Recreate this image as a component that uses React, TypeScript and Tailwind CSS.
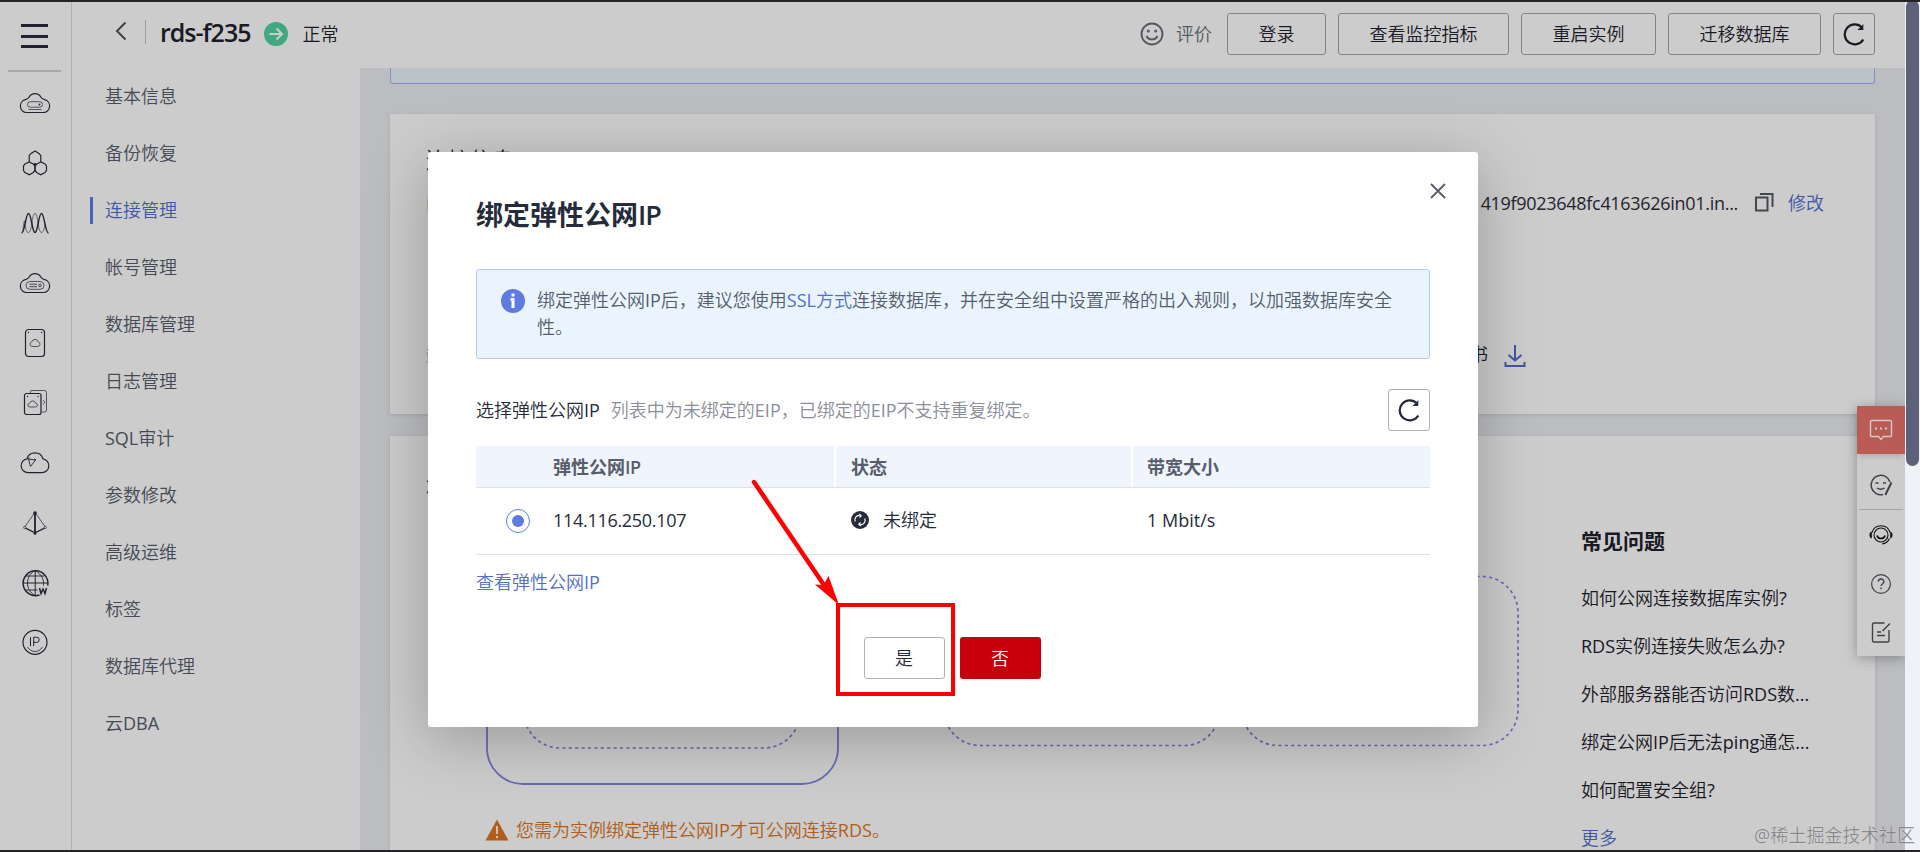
import type { ReactNode } from "react";
import { clsx } from "clsx";

const menu = [
  "基本信息",
  "备份恢复",
  "连接管理",
  "帐号管理",
  "数据库管理",
  "日志管理",
  "SQL审计",
  "参数修改",
  "高级运维",
  "标签",
  "数据库代理",
  "云DBA",
];

const faqs = [
  "如何公网连接数据库实例?",
  "RDS实例连接失败怎么办?",
  "外部服务器能否访问RDS数...",
  "绑定公网IP后无法ping通怎...",
  "如何配置安全组?",
];

const CLOUD =
  "M7.5 25.5a6.5 6.5 0 0 1-1.2-12.8c2-.5 3-1 3.9-2.7a6.6 6.6 0 0 1 11.6 0c.9 1.700 1.900 2.200 3.900 2.700a6.500 6.500 0 0 1-1.200 12.800z";

const railIcons: ReactNode[] = [
  <>
    <path d={CLOUD} />
    <rect x="8.500" y="14.700" width="15" height="5.500" rx="2.700" strokeWidth="0.7" />
    <circle cx="20.500" cy="17.500" r="0.900" fill="currentColor" stroke="none" />
    <path d="M9.500 22.500h13" strokeWidth="0.7" />
  </>,
  <>
    <path d="M10.200 15V8.700l1.500-2L16 4l4.300 2.700 1.500 2V15" />
    <path d="M10.200 15L6 17l-1.500 2v4.500l1.500 2 4.300 2.200 4-2.200 1.700-2V19l-1.700-2z" />
    <path d="M21.800 15l-4.100 2-1.700 2v4.500l1.700 2 4 2.200 4.300-2.200 1.500-2V19L26 17z" />
    <circle cx="16" cy="17.300" r="1.200" fill="currentColor" stroke="none" />
  </>,
  <>
    <path d="M2.500 26C6 26 6.500 6.500 9.500 6.500s3.500 19 6.500 19 3.500-19 6.500-19 3.500 19.500 7 19.500" strokeWidth="1.400" />
    <path
      d="M4 25C4 17 6 10 6 16c.5 5 1 9.500 3.500 9.500 4 0 3-19 6.500-19s2.500 19 6.500 19c2.500 0 3-6 3.500-9"
      strokeWidth="0.6"
    />
  </>,
  <>
    <path d={CLOUD} />
    <rect x="7" y="14.500" width="18" height="7.800" rx="3.900" strokeWidth="0.7" />
    <path d="M10.500 17.200h7.500M10.500 19.700h7.500" strokeWidth="0.8" />
    <circle cx="21" cy="18.400" r="1.300" strokeWidth="0.8" />
  </>,
  <>
    <rect x="6.500" y="2.500" width="19" height="27" rx="3" />
    <circle cx="9.500" cy="5.500" r="0.700" fill="currentColor" stroke="none" />
    <circle cx="22.500" cy="5.500" r="0.700" fill="currentColor" stroke="none" />
    <path
      d="M13 19.500a2.300 2.300 0 0 1-.3-4.500 3.400 3.400 0 0 1 6.600 0 2.300 2.300 0 0 1-.3 4.500z"
      strokeWidth="0.7"
    />
  </>,
  <>
    <path d="M11 6.500l1-3h13.500a2 2 0 0 1 2 2V23a2 2 0 0 1-2 2H23" strokeWidth="0.7" />
    <rect x="5.500" y="6.500" width="16.500" height="21" rx="2" />
    <circle cx="8.500" cy="9.500" r="0.700" fill="currentColor" stroke="none" />
    <circle cx="19" cy="9.500" r="0.700" fill="currentColor" stroke="none" />
    <path
      d="M11 20a1.900 1.900 0 0 1-.2-3.800 3 3 0 0 1 5.800 0A1.900 1.900 0 0 1 16.400 20zM24 13.500c2 0 2 3.500 0 3.500"
      strokeWidth="0.7"
    />
  </>,
  <>
    <path d="M9 25.700a7 7 0 0 1-1-13.900 8.400 8.400 0 0 1 16 0 7 7 0 0 1-1 13.900z" />
    <path d="M10 10.500c-.5 3 .5 6 1.500 9M11.500 19.500l5-6.500M8.500 12l8.500 1M17 13l-2-1" strokeWidth="0.9" />
  </>,
  <>
    <path d="M16 6v21" strokeWidth="1.800" />
    <path d="M15.500 6L6 19.500M16.500 6L26 19.500" strokeWidth="0.7" />
    <path d="M7 21.300l9 4.500 9-4.500" strokeWidth="1.300" />
    <circle cx="16" cy="6" r="1.800" fill="currentColor" stroke="none" />
    <circle cx="5.800" cy="20.500" r="1.200" strokeWidth="0.7" />
    <circle cx="26.200" cy="20.500" r="1.200" strokeWidth="0.7" />
    <circle cx="16" cy="26.500" r="1.200" strokeWidth="0.7" />
  </>,
  <>
    <path d="M20.500 28A12.400 12.400 0 1 1 28.700 18.500" strokeWidth="1.500" />
    <path d="M3.500 16h25.500M16.200 3.500v25" strokeWidth="1" />
    <path d="M16 3.500c-10 5-10 20 0 25M16 3.500c7 4 9 9 8.500 15M6.500 9h19M6.500 23h12" strokeWidth="0.9" />
    <path d="M20.500 21l1.500 5.500 2-4.500 2 4.500 1.500-5.500" strokeWidth="1.500" />
  </>,
  <>
    <circle cx="16" cy="15.300" r="12" />
    <path d="M11.500 10.200v9M14.700 19.200v-9h2.900a2.600 2.600 0 0 1 0 5.200h-2.900" strokeWidth="1" />
    <path d="M8.500 20c3.500 6 11.500 6 15 0" strokeWidth="0.8" />
  </>,
];

const RefreshIcon = () => (
  <svg viewBox="0 0 24 24" className="h-6 w-6" fill="none" stroke="currentColor" strokeWidth="2.200">
    <path d="M21.300 17.500a10 10 0 1 1-1.300-12" />
    <path d="M21.300 2v6h-6l3-2.500z" fill="currentColor" stroke="none" />
  </svg>
);

const HeaderButton = ({ children }: { children: ReactNode }) => (
  <button className="h-[42px] rounded-[3px] border border-[#a4a6ad] px-[30.500px] text-[#1f222d]">
    {children}
  </button>
);

const Header = () => (
  <header className="flex h-[66px] shrink-0 items-start pl-[43px] pr-[30px] pt-[11px]">
    <svg viewBox="0 0 12 20" className="mt-[8px] h-5 w-3" fill="none" stroke="#50535c" strokeWidth="2">
      <path d="M10.500 1.500L2 10l8.500 8.500" />
    </svg>
    <div className="ml-[18px] mt-[7px] h-6 w-px bg-[#c3c5ca]" />
    <h1 className="ml-[14px] text-[25px] font-semibold leading-[39px] tracking-[-1px] text-[#1f222d]">
      rds-f235
    </h1>
    <svg viewBox="0 0 24 24" className="ml-[13px] mt-[9px] h-6 w-6">
      <circle cx="12" cy="12" r="12" fill="#50d4a3" />
      <path d="M5.500 12h12M12.500 6.500L18 12l-5.500 5.500" fill="none" stroke="#fff" strokeWidth="2" />
    </svg>
    <span className="ml-[15px] leading-[42px] text-[#1f222d]">正常</span>

    <div className="ml-auto flex gap-3">
      <div className="mr-[3px] flex items-center gap-3 text-[#6c6f78]">
        <svg viewBox="0 0 24 24" className="h-6 w-6" fill="none" stroke="currentColor" strokeWidth="1.900">
          <circle cx="12" cy="12" r="10.500" />
          <path d="M6.500 14c2 4.500 9 4.500 11 0" />
          <circle cx="8.300" cy="9" r="0.600" />
          <circle cx="15.700" cy="9" r="0.600" />
        </svg>
        评价
      </div>
      <HeaderButton>登录</HeaderButton>
      <HeaderButton>查看监控指标</HeaderButton>
      <HeaderButton>重启实例</HeaderButton>
      <HeaderButton>迁移数据库</HeaderButton>
      <button className="flex h-[42px] w-[42px] items-center justify-center rounded-[3px] border border-[#a4a6ad] text-[#1f222d]">
        <RefreshIcon />
      </button>
    </div>
  </header>
);

const Rail = () => (
  <nav className="flex w-[72px] shrink-0 flex-col items-center border-r border-[#dcdde0] pr-[2px] pt-[22px]">
    <div className="flex h-6 w-[27px] flex-col justify-between">
      <i className="h-[3px] bg-[#292c3b]" />
      <i className="h-[3px] bg-[#292c3b]" />
      <i className="h-[3px] bg-[#292c3b]" />
    </div>
    <div className="mt-[22px] h-[2px] w-[53px] bg-[#d3d4d8]" />
    <div className="mt-[15px] flex flex-col gap-7">
      {railIcons.map((icon, i) => (
        <svg
          key={i}
          viewBox="0 0 32 32"
          className="h-8 w-8 text-[#292c3b]"
          fill="none"
          stroke="currentColor"
          strokeWidth="1.200"
        >
          {icon}
        </svg>
      ))}
    </div>
  </nav>
);

const SideMenu = () => (
  <aside className="w-72 shrink-0">
    {menu.map((item) => {
      const active = item === "连接管理";
      return (
        <div key={item} className="flex h-[57px] items-center pl-[18px]">
          <div className={clsx("h-[27px] w-[3px]", active && "bg-[#5e7ce0]")} />
          <span className={clsx("ml-3 pb-[2px]", active ? "text-[#526ecc]" : "text-[#575d6c]")}>
            {item}
          </span>
        </div>
      );
    })}
  </aside>
);

const ConnectionCard = () => (
  <section className="mt-[30px] h-[300px] shrink-0 bg-white px-9 pt-[29px] shadow-[0_1px_4px_rgba(0,0,0,0.12)]">
    <h2 className="text-[22px] leading-8 text-[#1f222d]">连接信息</h2>
    <div className="mt-[10px] flex h-9 items-center justify-between">
      <span className="text-[#8a8e99]">内网地址</span>
      <div className="mr-[15px] flex items-center text-[#2c2f3a]">
        <span className="tracking-[-0.300px]">419f9023648fc4163626in01.in...</span>
        <svg viewBox="0 0 20 20" className="mb-[2px] ml-4 h-5 w-5" fill="none" stroke="#575b66" strokeWidth="2">
          <path d="M2 5.500h11.500V18.500H2zM6 2h12.500v13" />
        </svg>
        <span className="ml-[14px] text-[#526ecc]">修改</span>
      </div>
    </div>
    <div className="mt-[115px] flex h-9 items-center justify-between">
      <span className="text-[#8a8e99]">数据库端口</span>
      <div className="mr-[313px] flex items-center text-[#1f222d]">
        证书
        <svg viewBox="0 0 22 24" className="ml-4 mt-[3px] h-6 w-[22px]" fill="none" stroke="#5469c9" strokeWidth="2">
          <path d="M11 1v15.500M4.500 11l6.500 5.500 6.500-5.500M1.500 18v4h19v-4" />
        </svg>
      </div>
    </div>
  </section>
);

// VPC / instance frames of the network diagram
const Topology = () => (
  <svg viewBox="0 0 1060 250" className="h-[250px] w-[1060px]" fill="none" stroke="#8286e0">
    <rect x="2" y="-40" width="351" height="284" rx="36" strokeWidth="1.800" />
    <rect x="39" y="37" width="276" height="171" rx="36" strokeWidth="1.700" strokeDasharray="3.200 3.200" />
    <rect x="459" y="37" width="276" height="168.500" rx="36" strokeWidth="1.700" strokeDasharray="3.200 3.200" />
    <rect x="757" y="36.500" width="276" height="169" rx="36" strokeWidth="1.700" strokeDasharray="3.200 3.200" />
  </svg>
);

const InstanceCard = () => (
  <section className="mt-[22px] flex h-[440px] shrink-0 bg-white pl-9 pt-[30px] shadow-[0_1px_4px_rgba(0,0,0,0.12)]">
    <div className="w-[1155px]">
      <h2 className="text-[22px] leading-8 text-[#1f222d]">连接实例</h2>
      <div className="ml-[59px] mt-[42px]">
        <Topology />
        <div className="mt-[26px] flex items-center text-[#dc7623]">
          <svg viewBox="0 0 24 22" className="h-[22px] w-6">
            <path d="M12 0.500L23.500 21.500H0.500z" fill="currentColor" />
            <path d="M12 7v8M12 17v2.200" stroke="#fff" strokeWidth="1.800" />
          </svg>
          <span className="ml-[7px]">您需为实例绑定弹性公网IP才可公网连接RDS。</span>
        </div>
      </div>
    </div>
    <div className="pt-[59px] text-[#1f222d]">
      <h3 className="font-['Open_Sans','Noto_Sans_CJK_SC',sans-serif] text-[21px] font-bold leading-8">常见问题</h3>
      <div className="mt-[17px]">
        {faqs.map((q) => (
          <p key={q} className="h-12 leading-[48px]">
            {q}
          </p>
        ))}
        <p className="leading-[48px] text-[#526ecc]">更多</p>
      </div>
    </div>
  </section>
);

const FloatingTools = () => (
  <div className="absolute left-[1857px] top-[406px] w-12 bg-white text-[#50535c] shadow-[0_2px_12px_rgba(0,0,0,0.3)]">
    <div className="flex h-12 items-center justify-center bg-[#e9746b] shadow-md">
      <svg viewBox="0 0 24 24" className="h-6 w-6" fill="none" stroke="#fff" strokeWidth="1.400">
        <path d="M2.500 2.500h19a1 1 0 0 1 1 1v14a1 1 0 0 1-1 1h-7L12 21.500l-2.500-3h-7a1 1 0 0 1-1-1v-14a1 1 0 0 1 1-1z" />
        <path d="M6 10.500h2M11 10.500h2M16 10.500h2" strokeWidth="2" />
      </svg>
    </div>
    <div className="mx-[2px] flex h-14 items-center justify-center border-b border-[#cfd0d3] pt-[6px]">
      <svg viewBox="0 0 24 24" className="h-6 w-6" fill="none" stroke="currentColor" strokeWidth="1.500">
        <path d="M14 21.500A9.700 9.700 0 1 1 21 9" />
        <path d="M22.500 9.500l-5.500 11-.5 1.500" strokeWidth="2" />
        <path d="M6.500 10h3M14 10h3M8 15c2 1.500 5.500 1.500 7.500 0" />
      </svg>
    </div>
    <div className="flex h-[50px] items-center justify-center text-[#111318]">
      <svg viewBox="0 0 24 24" className="h-6 w-6" fill="none" stroke="currentColor" strokeWidth="1.100">
        <circle cx="12" cy="12" r="7" />
        <path d="M3 9.500a9.400 9.400 0 0 1 18 0M20.500 15.500c-1.500 3.500-4 5-7.500 5.500" />
        <path d="M8 12.500c1 4 7 4 8 0" strokeWidth="1.600" />
        <path d="M2.800 8.500v7C-.3 15-.3 9 2.800 8.500zM21.200 8.500v7c3.100-.5 3.100-6.500 0-7z" fill="currentColor" stroke="none" />
      </svg>
    </div>
    <div className="flex h-[47px] items-center justify-center">
      <svg viewBox="0 0 24 24" className="h-6 w-6" fill="none" stroke="currentColor" strokeWidth="1.200">
        <circle cx="12" cy="12" r="9.400" />
        <path d="M9.300 9.700c0-3.600 5.600-3.600 5.600 0 0 2-2.800 2-2.800 4.300M12.100 15.500v1.800" strokeWidth="1.400" />
      </svg>
    </div>
    <div className="flex h-[49px] items-center justify-center">
      <svg viewBox="0 0 24 24" className="h-6 w-6" fill="none" stroke="currentColor" strokeWidth="1.400">
        <path d="M15.500 3H5a1.500 1.500 0 0 0-1.500 1.500v16A1.500 1.500 0 0 0 5 22h13.500a1.500 1.500 0 0 0 1.500-1.500V10M21 3.500L13.500 11M8 12h4M8 15.500h8" />
      </svg>
    </div>
  </div>
);

const BindDialog = () => (
  <div className="relative flex h-[575px] w-[1050px] flex-col rounded-[3px] bg-white px-12 shadow-[0_12px_60px_rgba(0,0,0,0.25)]">
    <svg
      viewBox="0 0 16 16"
      className="absolute right-8 top-[31px] h-4 w-4"
      fill="none"
      stroke="#575b66"
      strokeWidth="1.800"
    >
      <path d="M1 1l14 14M15 1L1 15" />
    </svg>
    <h2 className="mt-[43px] font-['Open_Sans','Noto_Sans_CJK_SC',sans-serif] text-[27px] font-bold leading-10 text-[#252b3a]">
      绑定弹性公网<span className="font-semibold tracking-[-1px]">IP</span>
    </h2>

    <div className="mt-[34px] flex h-[90px] rounded-[3px] border border-[#b8cbe8] bg-[#e9f4ff] pl-6 pt-[17px]">
      <svg viewBox="0 0 24 24" className="mt-[2px] h-6 w-6">
        <circle cx="12" cy="12" r="12" fill="#5e7ce0" />
        <path d="M12 4.500v3M9.500 10.500H12v8.500" fill="none" stroke="#fff" strokeWidth="3" />
      </svg>
      <p className="ml-3 w-[862px] leading-[27px] text-[#575d6c]">
        绑定弹性公网IP后，建议您使用<span className="text-[#526ecc]">SSL方式</span>
        连接数据库，并在安全组中设置严格的出入规则，以加强数据库安全性。
      </p>
    </div>

    <div className="mt-[30px] flex h-[42px] items-center">
      <span className="text-[#252b3a]">选择弹性公网IP</span>
      <span className="ml-[11px] text-[#8a8e99]">列表中为未绑定的EIP，已绑定的EIP不支持重复绑定。</span>
      <button className="ml-auto flex h-[42px] w-[42px] items-center justify-center rounded-[3px] border border-[#adb0b8] text-[#252b3a]">
        <RefreshIcon />
      </button>
    </div>

    <div className="mt-[15px] grid h-[42px] grid-cols-[360px_297px_297px] items-center border-b border-[#dfe1e6] bg-[#f0f4fd] font-['Open_Sans','Noto_Sans_CJK_SC',sans-serif] font-bold text-[#575d6c]">
      <div className="flex h-full items-center border-r-2 border-white pl-[77px]">
        弹性公网<span className="font-semibold tracking-[-0.500px]">IP</span>
      </div>
      <div className="flex h-full items-center border-r-2 border-white pl-[15px]">状态</div>
      <div className="pl-[14px]">带宽大小</div>
    </div>
    <div className="grid h-[67px] grid-cols-[360px_297px_297px] items-center border-b border-[#dfe1e6] text-[#252b3a]">
      <div className="flex items-center pl-[30px]">
        <span className="flex h-6 w-6 items-center justify-center rounded-full border border-[#5e7ce0]">
          <span className="h-3 w-3 rounded-full bg-[#5e7ce0]" />
        </span>
        <span className="mb-[2px] ml-[23px] tracking-[-0.300px]">114.116.250.107</span>
      </div>
      <div className="flex items-center pb-[2px] pl-[15px]">
        <svg viewBox="0 0 18 18" className="h-[18px] w-[18px]">
          <circle cx="9" cy="9" r="9" fill="#252b3a" />
          <path
            d="M4.200 10.500A4.500 4.500 0 0 1 8.500 4.300M13.800 7.500a4.500 4.500 0 0 1-4.300 6.200M8 3l2.200 1.700L8.500 6.500M10 15l-2.200-1.700L9.500 11.500"
            fill="none"
            stroke="#fff"
            strokeWidth="1.200"
          />
        </svg>
        <span className="ml-[14px]">未绑定</span>
      </div>
      <div className="pb-[2px] pl-[14px]">1 Mbit/s</div>
    </div>
    <a className="mt-[14px] leading-[27px] text-[#526ecc]">查看弹性公网IP</a>

    <div className="mt-[41px] flex justify-center gap-[15px] pr-[2px]">
      <button className="h-[42px] w-[81px] rounded-[3px] border border-[#adb0b8] text-[#252b3a]">是</button>
      <button className="h-[42px] w-[81px] rounded-[3px] bg-[#c7000b] text-white">否</button>
    </div>
  </div>
);

export default function App() {
  return (
    <div className="relative flex h-[852px] w-[1920px] flex-col overflow-hidden border-y-2 border-[#252326] bg-white font-['Open_Sans','Noto_Sans_CJK_SC_DemiLight','Noto_Sans_CJK_SC_Light','Noto_Sans_CJK_SC',sans-serif] text-lg">
      <div className="flex min-h-0 w-[1905px] flex-1">
        <Rail />
        <div className="flex min-w-0 flex-1 flex-col">
          <Header />
          <div className="flex min-h-0 flex-1">
            <SideMenu />
            <main className="flex min-w-0 flex-1 flex-col overflow-hidden bg-[#ebedf2] px-[30px]">
              <div className="h-4 shrink-0 rounded-b-[3px] border border-t-0 border-[#adb0f0] bg-[#e8f4fc]" />
              <ConnectionCard />
              <InstanceCard />
            </main>
          </div>
        </div>
      </div>

      <div className="absolute inset-0 -top-0.5 w-[1905px]">
        <FloatingTools />
      </div>

      <div className="absolute inset-0 flex w-[1906px] items-start justify-center bg-black/20 pt-[150px]">
        <BindDialog />
      </div>

      <div className="absolute -top-0.5 right-0 h-[850px] w-[15px] bg-[#f0f1f7] px-px">
        <div className="h-[466px] rounded-[7px] bg-[#5c6078]" />
      </div>

      {/* annotation: arrow and box around the confirm button */}
      <svg viewBox="0 0 220 240" className="absolute left-[740px] top-[468px] h-[240px] w-[220px]">
        <path d="M14 12L86 118" stroke="#ff0000" strokeWidth="4.500" strokeLinecap="round" />
        <path d="M99 135L75 114.500l8.500.5 5-9z" fill="#ff0000" />
        <rect x="98" y="135" width="115" height="89" fill="none" stroke="#ff0000" strokeWidth="4" />
      </svg>

      <div className="absolute bottom-0 right-[5px] leading-[30px] tracking-[0.100px] text-[#77787c] opacity-80 [text-shadow:0_0_1px_#fff]">
        @稀土掘金技术社区
      </div>
    </div>
  );
}
